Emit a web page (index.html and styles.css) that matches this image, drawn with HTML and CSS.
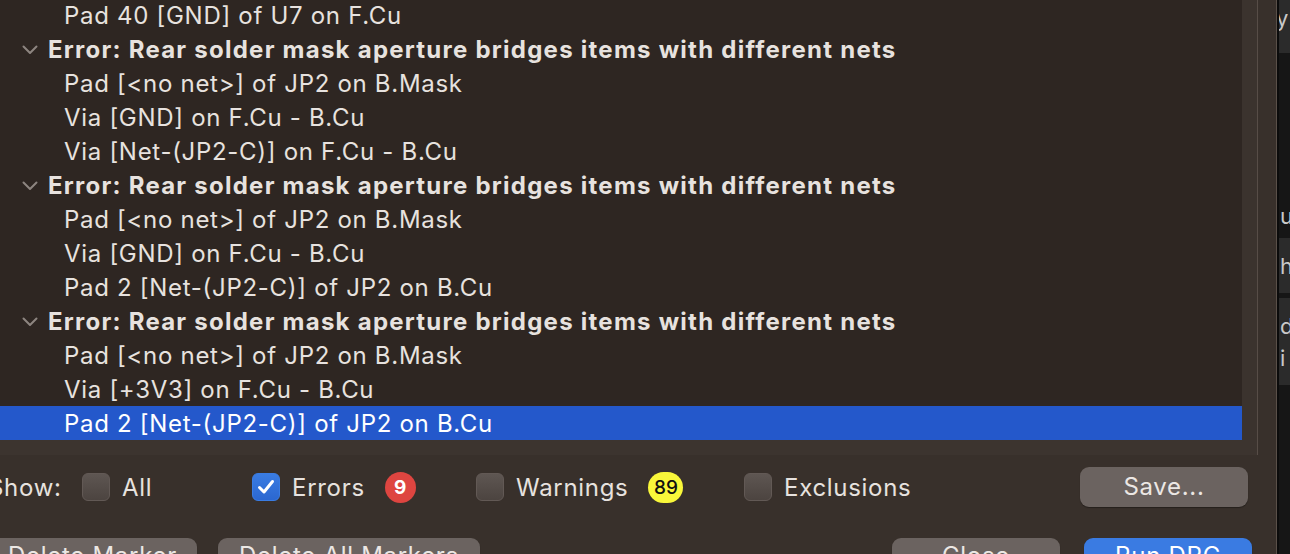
FILE: index.html
```html
<!DOCTYPE html>
<html>
<head>
<meta charset="utf-8">
<link rel="stylesheet" href="styles.css">
</head>
<body>
<div class="screen">
  <div class="dialog">
    <div class="frame">
      <div class="frame-inner">
        <div class="tree">
          <div class="row child">Pad 40 [GND] of U7 on F.Cu</div>
          <div class="row parent"><svg class="chev" width="16" height="10" viewBox="0 0 16 10"><path d="M1.5 1.5 L8 8 L14.5 1.5" fill="none" stroke="#8d8580" stroke-width="2" stroke-linecap="round" stroke-linejoin="round"/></svg><span>Error: Rear solder mask aperture bridges items with different nets</span></div>
          <div class="row child">Pad [&lt;no net&gt;] of JP2 on B.Mask</div>
          <div class="row child">Via [GND] on F.Cu - B.Cu</div>
          <div class="row child">Via [Net-(JP2-C)] on F.Cu - B.Cu</div>
          <div class="row parent"><svg class="chev" width="16" height="10" viewBox="0 0 16 10"><path d="M1.5 1.5 L8 8 L14.5 1.5" fill="none" stroke="#8d8580" stroke-width="2" stroke-linecap="round" stroke-linejoin="round"/></svg><span>Error: Rear solder mask aperture bridges items with different nets</span></div>
          <div class="row child">Pad [&lt;no net&gt;] of JP2 on B.Mask</div>
          <div class="row child">Via [GND] on F.Cu - B.Cu</div>
          <div class="row child">Pad 2 [Net-(JP2-C)] of JP2 on B.Cu</div>
          <div class="row parent"><svg class="chev" width="16" height="10" viewBox="0 0 16 10"><path d="M1.5 1.5 L8 8 L14.5 1.5" fill="none" stroke="#8d8580" stroke-width="2" stroke-linecap="round" stroke-linejoin="round"/></svg><span>Error: Rear solder mask aperture bridges items with different nets</span></div>
          <div class="row child">Pad [&lt;no net&gt;] of JP2 on B.Mask</div>
          <div class="row child">Via [+3V3] on F.Cu - B.Cu</div>
          <div class="row child selected">Pad 2 [Net-(JP2-C)] of JP2 on B.Cu</div>
        </div>
        <div class="vtrack"></div>
      </div>
      <div class="htrack"></div>
    </div>

    <div class="controls">
      <span class="show-label">Show:</span>
      <label class="opt opt-all"><span class="box"></span><span class="opt-text">All</span></label>
      <label class="opt opt-err"><span class="box checked"><svg width="20" height="18" viewBox="0 0 20 18"><path d="M3.5 9.5 L8 14 L16.5 3.5" fill="none" stroke="#ffffff" stroke-width="3" stroke-linecap="round" stroke-linejoin="round"/></svg></span><span class="opt-text">Errors</span><span class="badge badge-red">9</span></label>
      <label class="opt opt-warn"><span class="box"></span><span class="opt-text">Warnings</span><span class="badge badge-yellow">89</span></label>
      <label class="opt opt-excl"><span class="box"></span><span class="opt-text">Exclusions</span></label>
      <button class="btn btn-save">Save...</button>
    </div>

    <div class="buttons">
      <button class="btn btn-low btn-del">Delete Marker</button>
      <button class="btn btn-low btn-delall">Delete All Markers</button>
      <button class="btn btn-low btn-close">Close</button>
      <button class="btn btn-low btn-run">Run DRC</button>
    </div>
  </div>

  <div class="side">
    <div class="side-block side-top"><span class="frag frag-top">y</span></div>
    <div class="side-gap side-gap1"><span class="frag frag-u">u</span></div>
    <div class="side-block side-h"><span class="frag">h</span></div>
    <div class="side-gap side-gap2"></div>
    <div class="side-block side-d"><span class="frag">d</span><span class="frag">i</span></div>
  </div>
</div>
</body>
</html>
```
FILE: styles.css
```css
* { box-sizing: border-box; }
html, body {
  margin: 0;
  padding: 0;
  width: 1290px;
  height: 554px;
  overflow: hidden;
  background: #141414;
  font-family: "Inter", "Liberation Sans", sans-serif;
}
.screen {
  display: flex;
  width: 1290px;
  height: 554px;
  overflow: hidden;
}
.dialog {
  flex: none;
  width: 1297px;
  margin-left: -20px;
  height: 554px;
  background: #38302b;
  border-right: 1px solid #5a5049;
  display: flex;
  flex-direction: column;
}
.frame {
  width: 1278px;
  margin-top: -2px;
  border-right: 1px solid #574d47;
  flex: none;
}
.frame-inner {
  display: flex;
}
.tree {
  width: 1262px;
  height: 442px;
  background: #2e2622;
  overflow: hidden;
}
.vtrack {
  width: 15px;
  background: #3b332e;
}
.htrack {
  height: 15px;
  background: #3c342f;
}
.row {
  height: 34px;
  display: flex;
  align-items: center;
  color: #e7e2df;
  font-size: 24px;
  letter-spacing: 0.7px;
  white-space: nowrap;
}
.child { padding-left: 84px; }
.parent { padding-left: 42px; font-weight: 700; letter-spacing: 1.25px; }
.chev { margin-right: 10px; margin-top: 2px; }
.selected { background: #2458cb; color: #ffffff; }

.controls {
  height: 64px;
  display: flex;
  align-items: center;
  padding-left: 8px;
  color: #e7e2df;
  font-size: 24px;
  letter-spacing: 0.7px;
  flex: none;
}
.show-label { width: 94px; flex: none; }
.opt { display: flex; align-items: center; flex: none; }
.opt-all { width: 170px; }
.opt-err { width: 224px; }
.opt-warn { width: 268px; }
.box {
  width: 28px;
  height: 28px;
  border-radius: 6px;
  background: linear-gradient(#5e5652, #4c4440);
  border: 1px solid #625955;
  margin-right: 12px;
  display: flex;
  align-items: center;
  justify-content: center;
}
.box.checked {
  background: linear-gradient(#3a7ce2, #2b67d0);
  border-color: #3a7ce2;
}
.badge {
  margin-left: 20px;
  height: 31px;
  min-width: 31px;
  border-radius: 16px;
  display: flex;
  align-items: center;
  justify-content: center;
  font-size: 19px;
  font-weight: 700;
  letter-spacing: 0;
}
.badge-red { background: #de4540; color: #ffffff; }
.badge-yellow { background: #f9f73a; color: #111111; width: 35px; font-weight: 500; }

.btn {
  font-family: "Inter", "Liberation Sans", sans-serif;
  font-size: 24px;
  letter-spacing: 0.7px;
  color: #ebe7e4;
  background: #6b6360;
  border: none;
  border-radius: 9px;
  height: 40px;
  padding: 0 0 2px 0;
  flex: none;
  box-shadow: 0 1px 1px rgba(0,0,0,0.35);
}
.btn-low { padding-bottom: 6px; }
.btn-save { width: 168px; margin-left: auto; margin-right: 28px; }
.buttons {
  display: flex;
  padding-left: 8px;
  margin-top: 19px;
  flex: none;
}
.btn-del { width: 209px; }
.btn-delall { width: 262px; margin-left: 21px; }
.btn-close { width: 168px; margin-left: auto; }
.btn-run { width: 168px; margin-left: 24px; margin-right: 24px; background: #3a7be2; color: #ffffff; }

.side {
  flex: 1;
  border-left: 2px solid #0c0c0c;
  background: #161616;
  overflow: hidden;
  color: #c9c9c9;
  font-size: 22px;
  font-family: "Inter", "Liberation Sans", sans-serif;
}
.side-block { background: #2b2b2b; display: flex; flex-direction: column; }
.side-top { height: 53px; }
.side-gap1 { height: 185px; display: flex; flex-direction: column; justify-content: flex-end; }
.side-h { height: 55px; justify-content: center; }
.side-gap2 { height: 5px; }
.side-d { height: 87px; justify-content: center; }
.frag { display: block; line-height: 32px; margin-left: 1px; }
.frag-top { margin-top: 2px; margin-left: -3px; }
.frag-u { margin-bottom: 6px; }
```
